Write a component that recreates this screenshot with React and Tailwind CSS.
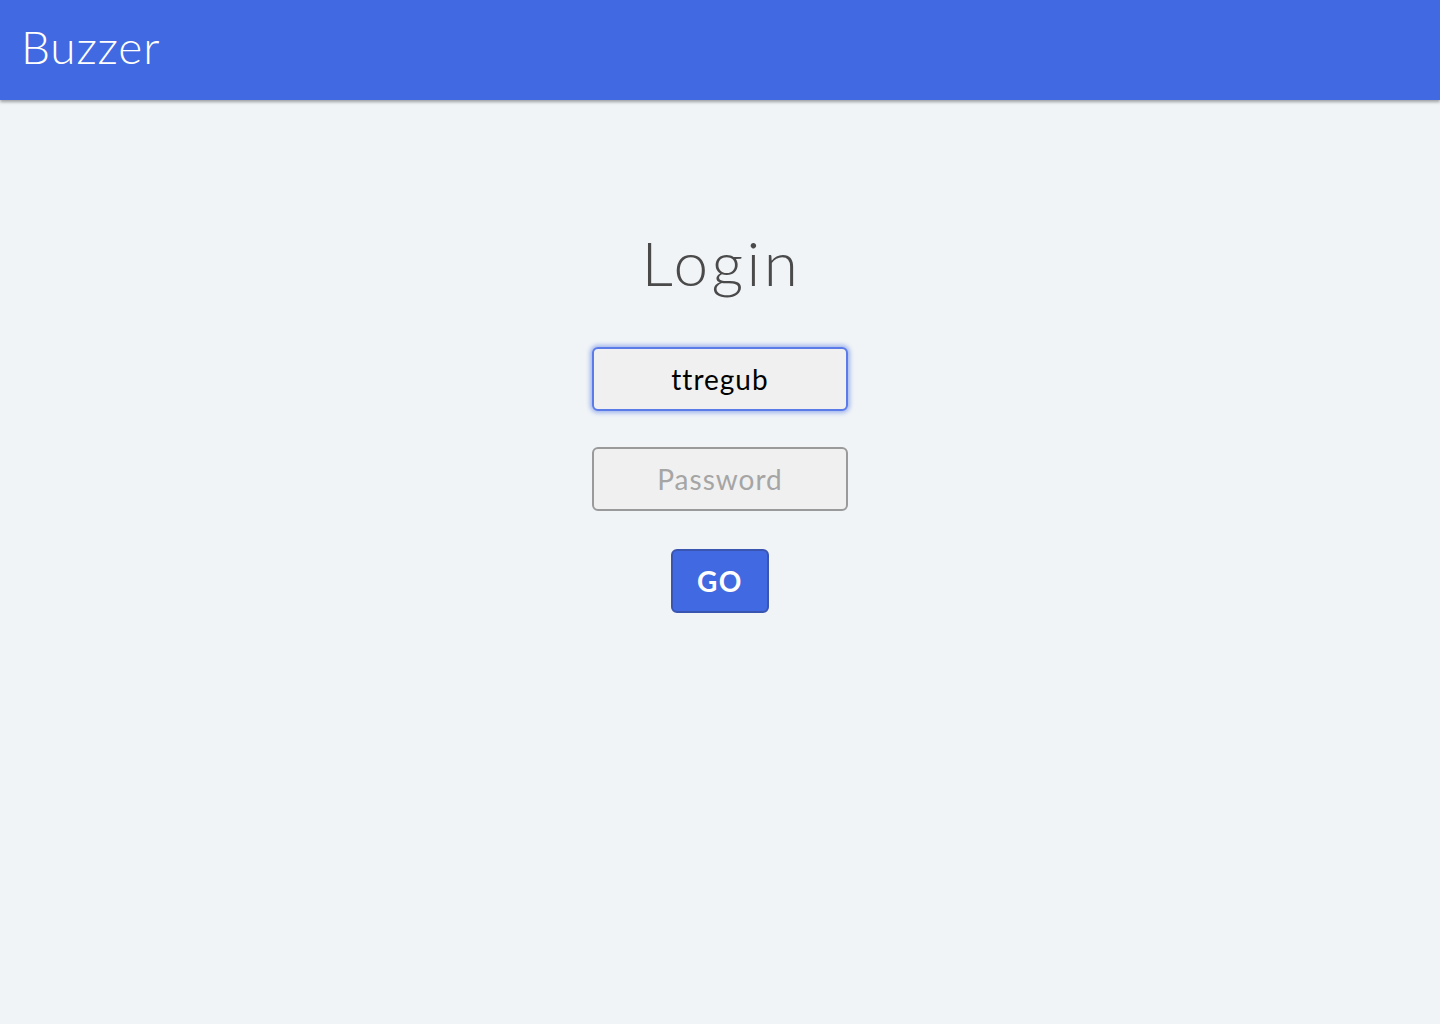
export default function App() {
  return (
    <div className="min-h-screen bg-[#f0f4f7] font-['Lato',sans-serif]">
      {/* Header */}
      <header className="h-[100px] bg-[#4169e1] flex items-center px-[21px] shadow-[0_2px_3px_rgba(0,0,0,0.35)]">
        <h1 className="text-white text-[46px] font-light tracking-[0.8px] leading-none -mt-[6px]">Buzzer</h1>
      </header>

      {/* Login form */}
      <main className="flex flex-col items-center pt-[131px]">
        <h2 className="text-[#4a4a4a] text-[62px] font-light leading-none tracking-[3.5px] pl-[3px]">Login</h2>
        <input
          type="text"
          defaultValue="ttregub"
          autoFocus
          className="mt-[54px] w-[256px] h-[64px] rounded-[6px] border-2 border-[#5b7be8] bg-[#f0f0f0] text-center text-[28px] tracking-[1px] text-black caret-black outline-none shadow-[0_0_4px_2px_rgba(65,105,225,0.45)]"
        />
        <input
          type="password"
          placeholder="Password"
          className="mt-[36px] w-[256px] h-[64px] rounded-[6px] border-2 border-[#9a9a9a] bg-[#f0f0f0] text-center text-[28px] tracking-[1px] text-black placeholder:text-[#a5a5a5] outline-none"
        />
        <button className="mt-[38px] w-[98px] h-[64px] rounded-[6px] border-2 border-[#3a55b0] bg-[#4169e1] text-white text-[28px] font-bold tracking-[1.5px]">
          GO
        </button>
      </main>
    </div>
  );
}
